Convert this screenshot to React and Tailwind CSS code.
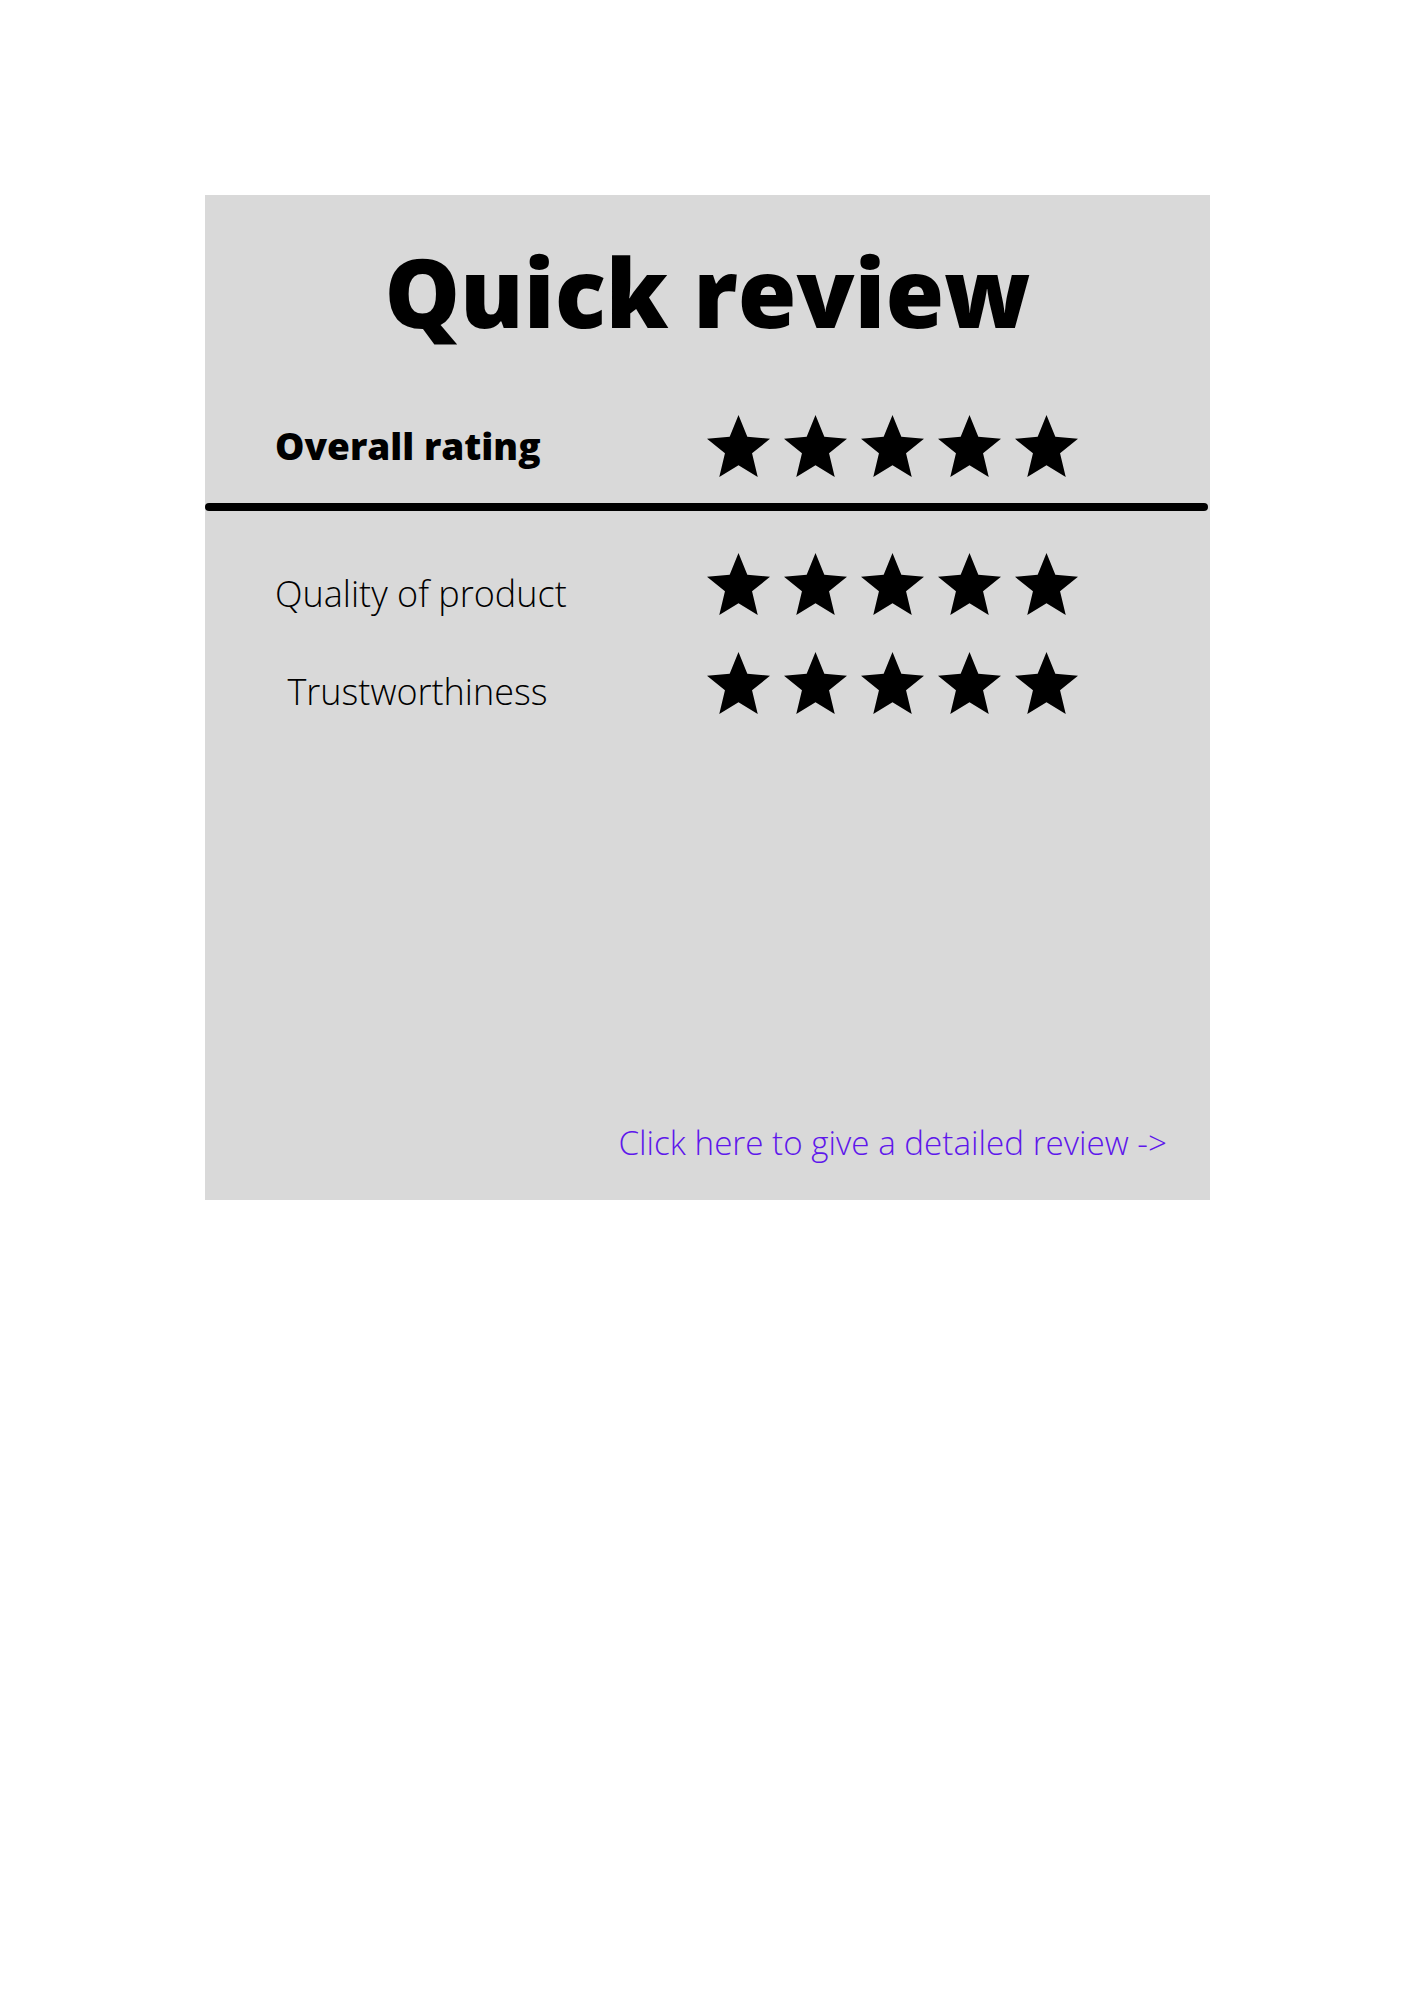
import React from 'react';

const Star = () => (
  <svg width="63" height="62" viewBox="0 0 100 100" preserveAspectRatio="none" className="block">
    <polygon
      points="50,0 64,35 100,38.5 71.5,61.5 80.5,100 50,81 19.5,100 28.5,61.5 0,38.5 36,35"
      fill="#000"
    />
  </svg>
);

const Stars = () => (
  <div className="flex items-center gap-[14px]">
    {[0, 1, 2, 3, 4].map((i) => (
      <Star key={i} />
    ))}
  </div>
);

const App = () => {
  return (
    <div className="min-h-[2000px] bg-white pt-[195px] pl-[205px] font-['Open_Sans',sans-serif] text-black">
      <div className="w-[1005px] h-[1005px] bg-[#d9d9d9] flex flex-col">
        {/* Title */}
        <h1 className="mt-[49px] text-center text-[95px] leading-none font-extrabold whitespace-nowrap">
          Quick review
        </h1>

        {/* Overall */}
        <div className="mt-[76px] flex items-center h-[62px]">
          <div className="w-[502px] pl-[70px]">
            <span className="text-[37px] leading-none font-extrabold whitespace-nowrap">Overall rating</span>
          </div>
          <Stars />
        </div>

        <div className="mt-[26px] h-[8px] w-[1003px] rounded-full bg-black" />

        {/* Detail ratings */}
        <div className="mt-[42px] flex items-center h-[62px]">
          <div className="w-[502px] pl-[70px] mt-[19px]">
            <div className="w-[285px] text-center text-[36px] leading-none font-light whitespace-nowrap">
              Quality of product
            </div>
          </div>
          <Stars />
        </div>
        <div className="mt-[37px] flex items-center h-[62px]">
          <div className="w-[502px] pl-[70px] mt-[18px]">
            <div className="w-[285px] text-center text-[36px] leading-none font-light whitespace-nowrap">
              Trustworthiness
            </div>
          </div>
          <Stars />
        </div>

        {/* Link */}
        <div className="mt-auto pb-[39px] pr-[43px] text-right">
          <a href="#" className="text-[33.2px] leading-none font-light text-[#5e17eb] whitespace-nowrap">
            Click here to give a detailed review -&gt;
          </a>
        </div>
      </div>
    </div>
  );
};

export default App;
